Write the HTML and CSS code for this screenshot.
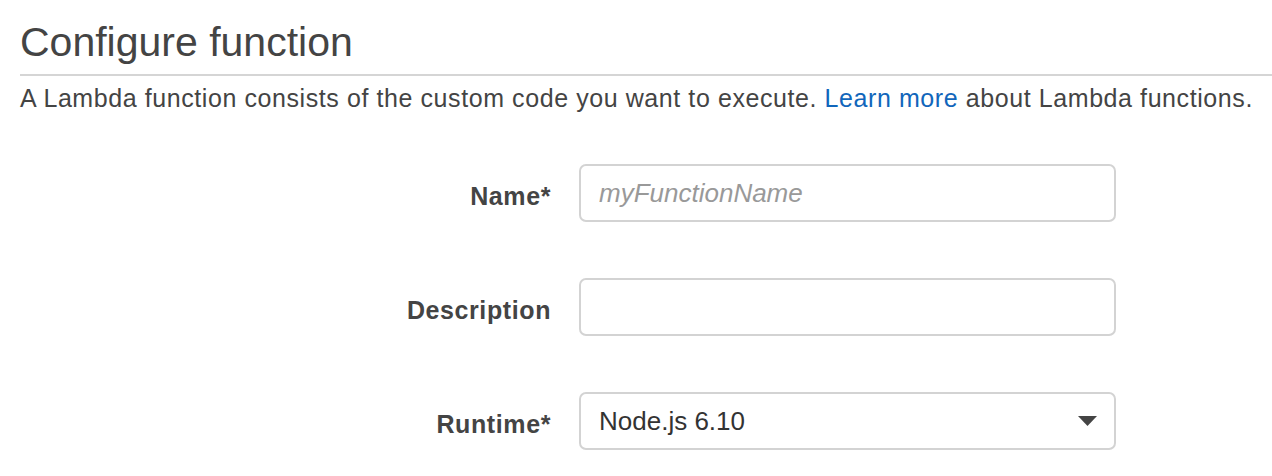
FILE: index.html
```html
<!DOCTYPE html>
<html>
<head>
<meta charset="utf-8">
<link rel="stylesheet" href="styles.css">
</head>
<body>
<div class="page">
  <h1 class="title">Configure function</h1>
  <p class="intro">A Lambda function consists of the custom code you want to execute. <a class="link" href="#">Learn more</a> about Lambda functions.</p>
  <form class="form">
    <div class="row">
      <label class="label" for="fn-name">Name*</label>
      <input class="field" id="fn-name" type="text" placeholder="myFunctionName">
    </div>
    <div class="row">
      <label class="label" for="fn-desc">Description</label>
      <input class="field" id="fn-desc" type="text">
    </div>
    <div class="row">
      <label class="label">Runtime*</label>
      <div class="field select">
        <span class="select-value">Node.js 6.10</span>
        <svg class="caret" width="19" height="10" viewBox="0 0 19 10"><path d="M0 0H19L9.5 10Z" fill="#444"/></svg>
      </div>
    </div>
  </form>
</div>
</body>
</html>
```
FILE: styles.css
```css
html, body {
  margin: 0;
  padding: 0;
  background: #fff;
}
.page {
  font-family: "Liberation Sans", Arial, sans-serif;
  color: #444;
  padding: 0 0 0 20px;
}
.title {
  margin: 0;
  padding-top: 20px;
  font-size: 41px;
  font-weight: normal;
  line-height: 44px;
  color: #444;
  padding-bottom: 10px;
  border-bottom: 2px solid #d5d5d5;
}
.intro {
  margin: 0;
  padding-top: 8px;
  font-size: 25px;
  letter-spacing: 0.58px;
  line-height: 28px;
  color: #444;
}
.link {
  color: #1166bb;
  text-decoration: none;
}
.form {
  display: flex;
  flex-direction: column;
  gap: 56px;
  margin-top: 52px;
}
.row {
  display: grid;
  grid-template-columns: 531px 537px;
  column-gap: 28px;
  align-items: center;
}
.label {
  text-align: right;
  font-weight: bold;
  font-size: 25px;
  letter-spacing: 0.6px;
  padding-top: 6px;
  color: #444;
}
.field {
  box-sizing: border-box;
  height: 58px;
  width: 537px;
  border: 2px solid #d3d3d3;
  border-radius: 7px;
  padding: 0 18px;
  font-family: "Liberation Sans", Arial, sans-serif;
  font-size: 26px;
  color: #333;
  background: #fff;
  outline: none;
}
.field::placeholder {
  color: #999;
  font-style: italic;
}
.select {
  display: flex;
  align-items: center;
  justify-content: space-between;
  padding-right: 17px;
}
.select-value {
  color: #333;
}
.caret {
  display: block;
}
```
